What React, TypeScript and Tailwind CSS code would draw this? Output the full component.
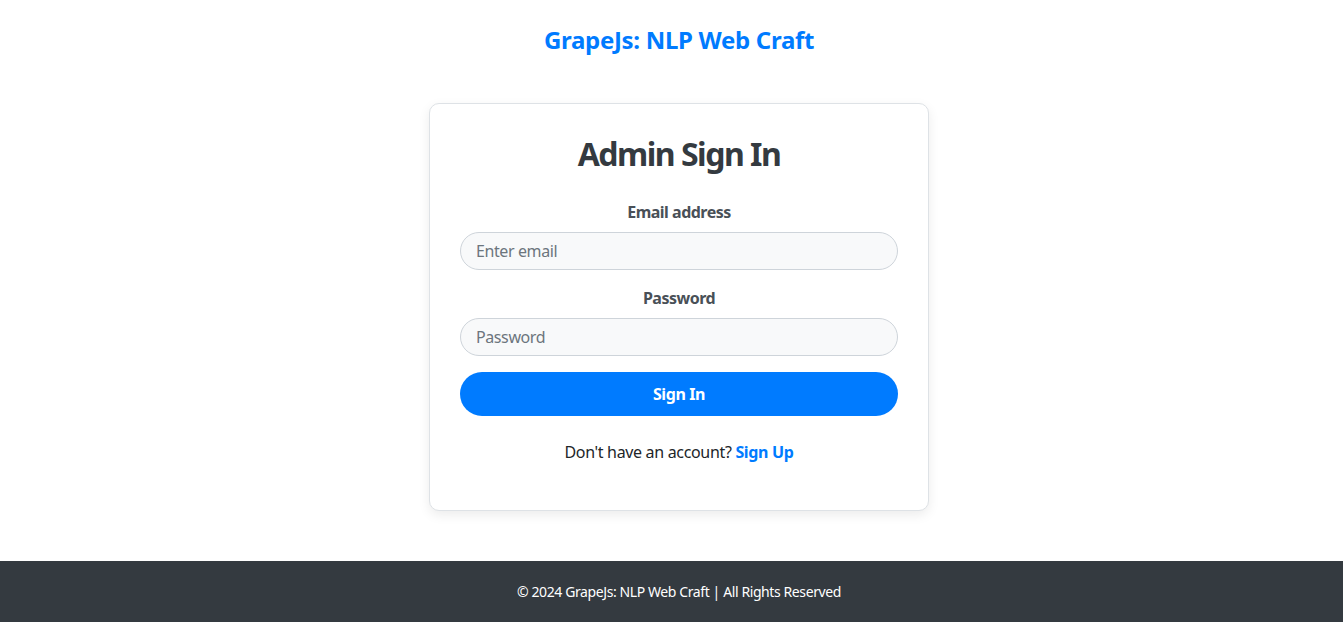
export default function App() {
  return (
    <div
      className="flex min-h-[622px] flex-col bg-white text-[#212529]"
      style={{ fontFamily: '"Noto Sans", "Open Sans", sans-serif' }}
    >
      {/* Header */}
      <header className="pl-[15px] pt-[25px] text-center">
        <h1 className="text-[24px] font-bold leading-[29px] tracking-[-0.3px] text-[#007bff]">GrapeJs: NLP Web Craft</h1>
      </header>

      {/* Sign in card */}
      <main className="flex justify-center pl-[15px] pt-[49px]">
        <div className="w-[500px] rounded-[10px] border border-[#dee2e6] bg-white px-[30px] pb-[46px] pt-[31px] shadow-[0_4px_12px_rgba(0,0,0,0.08)]">
          <h2 className="text-center text-[32px] font-bold leading-[38px] tracking-[-1.5px] text-[#343a40]">Admin Sign In</h2>

          <form className="mt-[27px]" onSubmit={(e) => e.preventDefault()}>
            <div className="flex flex-col">
              <label className="text-center text-[16px] font-bold leading-[24px] tracking-[-0.5px] text-[#495057]">Email address</label>
              <input
                type="email"
                placeholder="Enter email"
                className="mt-[8px] h-[38px] w-full rounded-full border border-[#ced4da] bg-[#f8f9fa] px-[15px] text-[16px] tracking-[-0.4px] text-[#495057] outline-none placeholder:text-[#6c757d]"
              />
            </div>

            <div className="mt-[16px] flex flex-col">
              <label className="text-center text-[16px] font-bold leading-[24px] tracking-[-0.5px] text-[#495057]">Password</label>
              <input
                type="password"
                placeholder="Password"
                className="mt-[8px] h-[38px] w-full rounded-full border border-[#ced4da] bg-[#f8f9fa] px-[15px] text-[16px] tracking-[-0.4px] text-[#495057] outline-none placeholder:text-[#6c757d]"
              />
            </div>

            <button
              type="submit"
              className="mt-[16px] h-[44px] w-full rounded-full bg-[#007bff] text-[16px] font-bold tracking-[-0.4px] text-white"
            >
              Sign In
            </button>
          </form>

          <p className="mt-[24px] text-center text-[16px] leading-[24px] tracking-[-0.33px] text-[#212529]">
            Don't have an account?{" "}
            <a href="#" className="font-bold text-[#007bff]">
              Sign Up
            </a>
          </p>
        </div>
      </main>

      {/* Footer */}
      <footer className="mt-auto bg-[#343a40] py-[20px] pl-[15px] text-center text-[14px] leading-[21px] tracking-[-0.4px] text-white">
        © 2024 GrapeJs: NLP Web Craft | All Rights Reserved
      </footer>
    </div>
  );
}
